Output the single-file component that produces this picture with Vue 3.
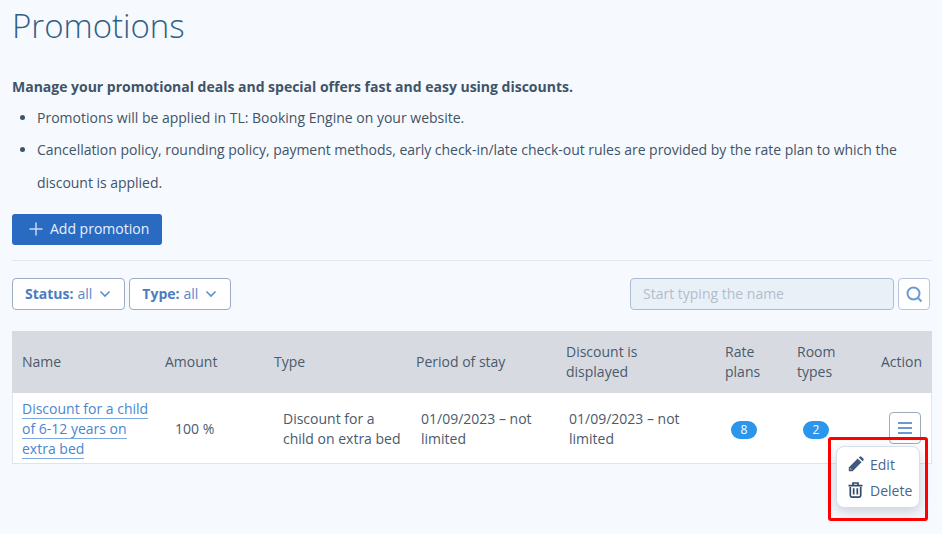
<script setup>
const filters = [
  { label: 'Status:', value: 'all' },
  { label: 'Type:', value: 'all' },
]
const headers = ['Name', 'Amount', 'Type', 'Period of stay', 'Discount is displayed', 'Rate plans', 'Room types', 'Action']
</script>

<template>
  <div class="page">
    <h1 class="title">Promotions</h1>
    <p class="lead">Manage your promotional deals and special offers fast and easy using discounts.</p>
    <ul class="notes">
      <li>Promotions will be applied in TL: Booking Engine on your website.</li>
      <li>Cancellation policy, rounding policy, payment methods, early check-in/late check-out rules are provided by the rate plan to which the discount is applied.</li>
    </ul>
    <button class="add">
      <svg width="14" height="14" viewBox="0 0 14 14"><path d="M7 .5v13M.5 7h13" stroke="#c9d9ee" stroke-width="1.5" fill="none"/></svg>
      <span>Add promotion</span>
    </button>
    <div class="rule"></div>
    <div class="toolbar">
      <button v-for="f in filters" :key="f.label" class="filter">
        <b>{{ f.label }}</b> {{ f.value }}
        <svg class="chev" width="12" height="8" viewBox="0 0 12 8"><path d="M1.5 1.5 6 6l4.5-4.5" stroke="#5b8fd0" stroke-width="1.6" fill="none"/></svg>
      </button>
      <div class="search">
        <input class="input" placeholder="Start typing the name" disabled />
        <button class="search-btn">
          <svg width="18" height="18" viewBox="0 0 18 18"><circle cx="8.5" cy="8.5" r="6" stroke="#6a9ad6" stroke-width="2" fill="none"/><path d="m13 13 3.5 3.5" stroke="#6a9ad6" stroke-width="2" fill="none"/></svg>
        </button>
      </div>
    </div>
    <div class="table">
      <div class="row head">
        <div v-for="h in headers" :key="h" class="th"><span>{{ h }}</span></div>
      </div>
      <div class="row body">
        <div class="td name"><a class="link">Discount for a child of 6-12 years on extra bed</a></div>
        <div class="td amount">100 %</div>
        <div class="td type">Discount for a child on extra bed</div>
        <div class="td period">01/09/2023 – not limited</div>
        <div class="td shown">01/09/2023 – not limited</div>
        <div class="td rate"><span class="badge">8</span></div>
        <div class="td room"><span class="badge">2</span></div>
        <div class="td action">
          <button class="menu-btn">
            <svg width="16" height="12" viewBox="0 0 16 12"><path d="M1 1h14M1 6h14M1 11h14" stroke="#6a9ad6" stroke-width="1.8" fill="none"/></svg>
          </button>
        </div>
      </div>
      <div class="menu">
        <div class="item">
          <svg width="16" height="16" viewBox="0 0 16 16"><path d="M.8 15.2v-3.8l8.9-8.9 3.8 3.8-8.9 8.9z" fill="#3f5a7d"/><path d="M2.4 13.6v-1.5l1.5 1.5z" fill="#fff"/><path d="M10.8 1.4 11.6.7a1.3 1.3 0 0 1 1.8 0l1.9 1.9a1.3 1.3 0 0 1 0 1.8l-.7.8z" fill="#3f5a7d"/></svg>
          <span>Edit</span>
        </div>
        <div class="item">
          <svg width="16" height="16" viewBox="0 0 16 16"><path d="M.5 3.6h14M5 3V1h5v2" stroke="#2f4a6b" stroke-width="1.7" fill="none"/><path d="M2.3 5v8.5a1.6 1.6 0 0 0 1.6 1.6h7.2a1.6 1.6 0 0 0 1.6-1.6V5M5.7 6.2v6.2M9.3 6.2v6.2" stroke="#2f4a6b" stroke-width="1.7" fill="none"/></svg>
          <span>Delete</span>
        </div>
      </div>
      <div class="highlight"></div>
    </div>
  </div>
</template>

<style>
html, body { margin: 0; background: #f6f9fe; }
</style>

<style scoped>
.page {
  box-sizing: border-box;
  width: 942px;
  height: 534px;
  overflow: hidden;
  padding: 0 10px 0 12px;
  font-family: "Open Sans", sans-serif;
  font-size: 14px;
  color: #3f5468;
  background: #f6f9fe;
}
.title { margin: 0; padding-top: 3px; font-size: 33px; line-height: 45px; font-weight: 300; color: #2f5f86; }
.lead { margin: 29px 0 0; line-height: 20px; font-weight: 700; color: #3f5468; letter-spacing: -.01px; }
.notes { margin: 4px 0 0; padding: 0 0 0 25px; line-height: 33px; letter-spacing: -.025px; }
.notes li:first-child { margin-bottom: -1px; letter-spacing: 0; }
.add {
  display: flex; align-items: center; gap: 7px;
  margin-top: 15px; height: 31px; width: 150px; padding: 0 0 2px 17px; box-sizing: border-box;
  background: #2a6bc2; color: #e8f0fb; border: 0; border-radius: 3px;
  font: 14px "Open Sans", sans-serif;
}
.rule { height: 1px; background: #e2e7f0; margin-top: 15px; }
.toolbar { display: flex; gap: 4px; margin-top: 17px; }
.filter {
  display: flex; align-items: center; gap: 4px; height: 32px; padding: 0 13px 2px 12px; box-sizing: border-box;
  background: #fff; border: 1px solid #9dabc6; border-radius: 4px;
  font: 14px "Open Sans", sans-serif; color: #5b88c9;
}
.filter b { color: #4a7cc0; font-weight: 700; }
.chev { margin-left: 3px; margin-top: 2px; }
.search { display: flex; gap: 4px; margin-left: auto; padding-right: 2px; }
.input {
  box-sizing: border-box; width: 264px; height: 32px; padding: 0 12px 2px;
  background: #e9f0f8; border: 1px solid #aebcd4; border-radius: 4px;
  font: 14px "Open Sans", sans-serif;
}
.input::placeholder { color: #b3bdcb; opacity: 1; }
.search-btn {
  display: flex; align-items: center; justify-content: center; padding: 0;
  box-sizing: border-box; width: 32px; height: 32px; background: #fff; border: 1px solid #b9c6da; border-radius: 4px;
}
.table { position: relative; margin-top: 21px; width: 920px; }
.row { display: grid; grid-template-columns: 143px 109px 142px 150px 159px 72px 84px 61px; }
.head { height: 62px; background: #d7dbe1; align-items: center; }
.th { padding-left: 10px; line-height: 20px; color: #4a5a6c; }
.th:nth-child(5) { padding-right: 50px; }
.th:nth-child(6) { padding-right: 10px; }
.th:nth-child(7) { padding-right: 30px; }
.body {
  box-sizing: border-box; height: 71px; padding-top: 2px; background: #fff;
  border: 1px solid #dfe3ea; border-top: 0; align-items: center; line-height: 20px; color: #4a5a6c;
}
.td { padding-left: 10px; }
.name { padding-left: 9px; padding-right: 6px; }
.link { color: #4a86d0; text-decoration: none; border-bottom: 1px solid #7ba8e0; }
.amount { padding-left: 19px; }
.type { padding-left: 18px; padding-right: 5px; }
.period { padding-left: 14px; padding-right: 20px; }
.shown { padding-left: 12px; padding-right: 30px; }
.rate { padding-left: 15px; }
.room { padding-left: 15px; }
.badge {
  display: inline-block; width: 26px; height: 18px; line-height: 18px; border-radius: 9px;
  background: #2c96ec; color: #fff; font-size: 12px; text-align: center;
}
.action { padding-left: 17px; margin-top: -2px; }
.menu-btn {
  display: flex; align-items: center; justify-content: center; padding: 0; box-sizing: border-box;
  width: 32px; height: 32px; background: #fff; border: 1px solid #9dabbd; border-radius: 4px;
}
.menu {
  position: absolute; left: 824px; top: 115px; width: 84px; height: 62px; box-sizing: border-box;
  padding: 4px 0 0 11px; background: #fff; border: 1px solid #d3e0f0; border-radius: 8px;
  box-shadow: 0 4px 12px rgba(60, 70, 90, .22);
}
.item { display: flex; align-items: center; gap: 6px; height: 26px; color: #4a6688; }
.highlight {
  position: absolute; left: 816px; top: 106px; width: 100px; height: 84px;
  box-sizing: border-box; border: 3px solid #f00; border-radius: 3px; pointer-events: none;
}
</style>
